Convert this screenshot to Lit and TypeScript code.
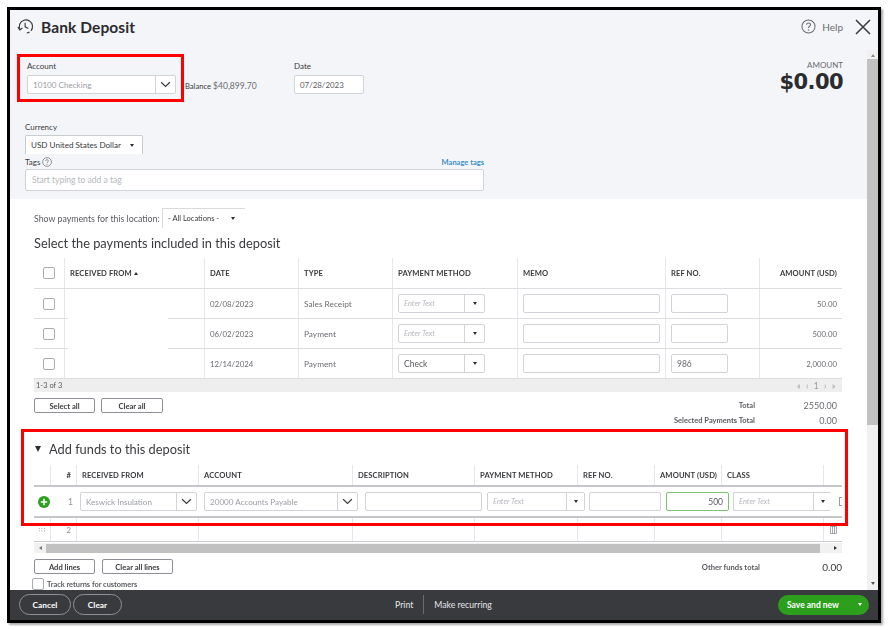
import { LitElement, html, css } from "lit";
import { customElement } from "lit/decorators.js";

const chevron = html`<svg class="chev" viewBox="0 0 12 8" width="11" height="7"><path d="M1 1.5 6 6.2 11 1.5" fill="none" stroke="#393a3d" stroke-width="1.4"/></svg>`;
const caret = html`<span class="caret"></span>`;
const qmark = (s: number) => html`<svg width=${s} height=${s} viewBox="0 0 16 16"><circle cx="8" cy="8" r="7" fill="none" stroke="#6b6c72" stroke-width="1.1"/><path d="M5.9 6.2C6 4.8 7 4.2 8 4.2c1.2 0 2.2.8 2.2 1.9 0 1.6-2.2 1.7-2.2 3.4" fill="none" stroke="#6b6c72" stroke-width="1.1"/><circle cx="8" cy="11.6" r=".8" fill="#6b6c72"/></svg>`;

const rows1 = [
  { date: "02/08/2023", type: "Sales Receipt", pm: "", ref: "", amt: "50.00" },
  { date: "06/02/2023", type: "Payment", pm: "", ref: "", amt: "500.00" },
  { date: "12/14/2024", type: "Payment", pm: "Check", ref: "986", amt: "2,000.00" },
];
const head1 = ["", "RECEIVED FROM", "DATE", "TYPE", "PAYMENT METHOD", "MEMO", "REF NO.", "AMOUNT (USD)"];
const head2 = ["", "#", "RECEIVED FROM", "ACCOUNT", "DESCRIPTION", "PAYMENT METHOD", "REF NO.", "AMOUNT (USD)", "CLASS", ""];

@customElement("app-root")
export class AppRoot extends LitElement {
  static styles = css`
    :host { display: block; width: 892px; height: 630px; background: #fff; font-family: Lato, "Open Sans", sans-serif; color: #393a3d; overflow: hidden; }
    * { box-sizing: border-box; }
    .page { padding: 7px 0 0 7px; }
    .window { position: relative; width: 874px; height: 616px; border: 3px solid #000; box-shadow: 2px 2px 2px #aaa; display: flex; flex-direction: column; background: #fff; filter: blur(0.3px); }
    .titlebar { height: 40px; flex: none; background: #f4f5f8; display: flex; align-items: center; padding: 0 7px 7px 7px; }
    .titlebar h1 { margin: 0 0 0 7px; font-size: 15.5px; font-weight: 700; color: #2b2c30; letter-spacing: .1px; }
    .spacer { flex: 1; }
    .help { font-size: 10px; color: #6b6c72; margin: 0 12px 0 6px; }
    .body { flex: 1; display: flex; min-height: 0; }
    .main { flex: 1; min-width: 0; overflow: hidden; }
    .vbar { width: 11px; flex: none; background: #f1f1f1; display: flex; flex-direction: column; align-items: center; }
    .vbar .thumb { width: 100%; height: 366px; background: #c1c1c1; margin-top: 2px; }
    .vbar .end { flex: 1; }
    .tri-up { width: 0; height: 0; border: 2px solid transparent; border-bottom: 3px solid #8a8a8a; margin-top: 2px; }
    .tri-down { width: 0; height: 0; border: 2px solid transparent; border-top: 3px solid #555; margin-bottom: 3px; }

    .panel { height: 149px; background: #f4f5f8; display: flex; flex-direction: column; }
    .acct-row { height: 69px; display: flex; padding: 11px 24px 0 17px; }
    .lbl { font-size: 8px; color: #393a3d; line-height: 11px; }
    .acct { width: 149px; margin-top: 3px; }
    .bal { font-size: 7.6px; margin: 20px 0 0 9px; width: 100px; white-space: nowrap; }
    .bal span { font-size: 8.6px; color: #6b6c72; }
    .date { margin-left: 9px; }
    .date .field { width: 70px; margin-top: 3px; height: 19px; font-size: 7.9px; color: #5a5b60; }
    .amount { margin-left: auto; text-align: right; line-height: 1; }
    .amount .small { font-size: 8px; color: #6b6c72; margin-top: 0; }
    .amount .big { font-size: 21px; font-weight: 700; color: #2b2c30; margin-top: 3px; font-family: "DejaVu Sans", sans-serif; letter-spacing: -.6px; }
    .cur { padding-left: 15px; margin-top: 3px; }
    .cur .select { width: 118px; height: 19px; margin-top: 2px; border: 1px solid #c9ccd1; border-bottom: none; border-radius: 2px 2px 0 0; background: #fff; display: flex; align-items: center; justify-content: space-between; padding: 0 8px 0 5px; font-size: 8.1px; white-space: nowrap; }
    .tags { padding: 0 0 0 15px; width: 474px; margin-top: 1px; }
    .tags-head { display: flex; align-items: center; justify-content: space-between; height: 14px; }
    .tags-left { display: flex; align-items: center; gap: 2px; }
    .manage { font-size: 7.5px; color: #3a8fc8; font-weight: 700; }
    .tags .field { height: 22px; width: 100%; font-size: 8.5px; color: #b5b8be; padding-left: 6px; }

    .field { display: flex; align-items: center; background: #fff; border: 1px solid #d0d3d8; border-radius: 2px; padding: 0 5px; font-size: 8.5px; white-space: nowrap; overflow: hidden; }
    .combo { display: flex; background: #fff; border: 1px solid #d0d3d8; border-radius: 2px; height: 19px; font-size: 8.1px; overflow: hidden; white-space: nowrap; }
    .combo .txt { flex: 1; min-width: 0; display: flex; align-items: center; padding-left: 5px; color: #9a9da3; }
    .combo .txt.val { color: #5a5b60; font-size: 8.5px; }
    .combo .txt.ph { font-style: italic; color: #b5b8be; font-size: 7.5px; }
    .combo .btn { flex: none; width: 20px; border-left: 1px solid #d0d3d8; display: flex; align-items: center; justify-content: center; }
    .caret { width: 0; height: 0; border-left: 2.5px solid transparent; border-right: 2.5px solid transparent; border-top: 3px solid #2b2c30; }
    .caret.up { transform: rotate(180deg); margin-left: 2px; }

    .sec { padding-left: 24px; width: 832px; }
    .loc { display: flex; height: 20px; margin-top: 9px; align-items: center; font-size: 8.8px; color: #5a5b60; }
    .loc .name { width: 128px; white-space: nowrap; }
    .loc .select { width: 83px; height: 20px; border: 1px solid #d8dade; border-width: 1px 0 0 1px; display: flex; align-items: center; justify-content: space-between; padding: 0 10px 0 5px; font-size: 7.5px; color: #393a3d; }
    h2 { margin: 0; font-weight: 400; font-size: 12.8px; color: #393a3d; }
    .h-sel { height: 30px; line-height: 30px; }

    .t1 .row { display: grid; grid-template-columns: 31px 140px 94px 94px 125px 148px 94px 82px; border-bottom: 1px solid #dcdee2; }
    .t1 .head { height: 31px; }
    .t1 .r { height: 30px; }
    .t1 .r:last-child { height: 29px; border-bottom: 2px solid #c4c6ca; }
    .t1body { position: relative; }
    .mask { position: absolute; left: 34px; width: 100px; top: 0; bottom: 2px; background: #fff; }
    .cell { border-right: 1px solid #e6e7ea; display: flex; align-items: center; padding: 0 5px; font-size: 8.3px; color: #6b6c72; min-width: 0; white-space: nowrap; overflow: hidden; }
    .cell:last-child { border-right: none; }
    .cell.num { font-size: 7.8px; }
    .hd { font-size: 7.6px; font-weight: 700; color: #393a3d; letter-spacing: .1px; }
    .cell.right { justify-content: flex-end; }
    .cell.center { justify-content: center; padding: 0; }
    .cell .combo { width: 87px; }
    .cell .field { height: 19px; }
    .memo { width: 138px; }
    .ref { width: 57px; color: #6b6c72; }
    .box { width: 12px; height: 12px; border: 1px solid #a8abb0; border-radius: 2px; background: #fff; flex: none; }
    .pager { height: 13px; background: #eeeeee; display: flex; align-items: center; justify-content: space-between; padding: 0 5px 0 2px; font-size: 7.5px; color: #5a5b60; }
    .pager .nav { color: #999ba0; letter-spacing: 1.6px; font-size: 8.5px; }
    .below { height: 37px; display: flex; justify-content: space-between; }
    .btns { display: flex; gap: 6px; padding-top: 6px; }
    .b { height: 15px; border: 1px solid #8d9096; border-radius: 2px; background: #fff; font-size: 7.6px; font-weight: 700; color: #393a3d; display: flex; align-items: center; justify-content: center; }
    .w61 { width: 61px; } .w62 { width: 62px; } .w71 { width: 71px; }
    .totals { display: grid; grid-template-columns: 150px 82px; width: 232px; align-items: center; grid-auto-rows: 15px; padding-top: 6px; margin-right: 5px; font-size: 7.5px; font-weight: 700; color: #5a5b60; text-align: right; }
    .totals .v { font-size: 9px; font-weight: 400; color: #6b6c72; }

    .h-add { height: 36px; display: flex; align-items: center; gap: 8px; padding-top: 4px; padding-left: 1px; }
    .tri { width: 0; height: 0; border-left: 3.5px solid transparent; border-right: 3.5px solid transparent; border-top: 6px solid #2b2c30; }
    .t2 .cols { display: grid; grid-template-columns: 17px 26px 122px 154px 122px 103px 77px 67px 102px 18px; }
    .t2 .head { height: 22px; border-bottom: 2px solid #c4c6ca; }
    .t2 .head .cell { padding-bottom: 1px; }
    .edit { height: 31px; display: flex; align-items: center; border-bottom: 2px solid #c4c6ca; overflow: hidden; }
    .edit > .plus { width: 17px; flex: none; display: flex; justify-content: center; padding-left: 3px; }
    .edit > .n { width: 22px; flex: none; text-align: right; font-size: 8.5px; color: #8d9096; }
    .edit .combo, .edit .field { flex: none; height: 19px; }
    .f-rf { width: 117px; margin-left: 7px; }
    .f-ac { width: 154px; margin-left: 7px; }
    .f-de { width: 117px; margin-left: 7px; }
    .f-pm { width: 98px; margin-left: 5px; }
    .f-pm .btn, .f-cl .btn { width: 18px; }
    .f-re { width: 72px; margin-left: 4px; }
    .f-am { width: 63px; margin-left: 5px; border-color: #7ac472 !important; justify-content: flex-end; color: #5a5b60; }
    .f-cl { width: 98px; margin-left: 4px; border-right: none !important; }
    .stub { flex: none; width: 4px; height: 9px; margin-left: 8px; border: 1px solid #9a9da3; border-right: none; }
    .r2 { height: 24px; border-bottom: 1px solid #c9ccd1; }
    .r2 .cell { color: #8d9096; }
    .grip { width: 8px; height: 6px; background-image: radial-gradient(#8f9196 0.7px, transparent 0.8px); background-size: 2.6px 2.6px; }
    .hbar { height: 10px; margin-top: 1px; background: #f1f1f1; display: flex; align-items: center; }
    .hbar .thumb { margin-left: 10px; width: 774px; height: 9px; background: #c1c1c1; }
    .tl { width: 0; height: 0; margin-left: 3px; margin-right: -6px; border: 2px solid transparent; border-right: 3px solid #777; }
    .tr { width: 0; height: 0; margin-left: 14px; border: 2px solid transparent; border-left: 3px solid #333; }
    .below2 { display: flex; justify-content: space-between; }
    .btns2 { display: flex; gap: 7px; padding-top: 6px; }
    .other { display: flex; align-items: center; padding-top: 6px; height: 21px; font-size: 7.6px; color: #5a5b60; font-weight: 700; }
    .other .v { width: 82px; text-align: right; font-size: 10px; font-weight: 400; color: #393a3d; }
    .track { display: flex; align-items: center; margin: 4px 0 0 -2px; font-size: 7.4px; font-weight: 700; color: #5a5b60; gap: 3px; }

    .footer { height: 30px; flex: none; background: #393a3d; display: flex; align-items: center; padding: 0 9px 1px; color: #e4e5e8; font-size: 8.7px; }
    .pill { height: 21px; border: 1px solid #8d9096; border-radius: 11px; display: flex; align-items: center; justify-content: center; font-weight: 700; color: #fff; font-size: 8.3px; }
    .cancel { width: 52px; } .clear { width: 49px; margin-left: 2px; }
    .mid { position: absolute; left: 385px; display: flex; align-items: center; }
    .mid .sep { width: 1px; height: 19px; background: #6b6c72; margin: 0 10px; }
    .save { margin-left: auto; width: 91px; height: 20px; border-radius: 10px; background: #2ca01c; color: #fff; font-weight: 700; font-size: 8.5px; display: flex; align-items: center; padding: 0 7px 0 9px; justify-content: space-between; }
    .caret.w { border-top-color: #fff; }

    .red { position: absolute; border: 3px solid #f00; pointer-events: none; }
    .red1 { left: 7px; top: 44px; width: 167px; height: 48px; }
    .red2 { left: 11px; top: 419px; width: 827px; height: 97px; }
  `;

  private combo(text: string, cls: string, kind: "" | "val" | "ph", arrow: unknown) {
    return html`<div class="combo ${cls}"><div class="txt ${kind}">${text}</div><div class="btn">${arrow}</div></div>`;
  }

  render() {
    return html`<div class="page"><div class="window">
      <div class="titlebar">
        <svg width="17" height="17" viewBox="0 0 18 18" fill="none" stroke="#393a3d" stroke-width="1.2">
          <path d="M3.2 12.2A7 7 0 1 1 9 16" stroke-dasharray="30 2 3 2"/>
          <path d="M1 9.6 3 12.6 5.8 10.6" />
          <path d="M8.6 5v4.4l3.4 1.6"/>
        </svg>
        <h1>Bank Deposit</h1>
        <div class="spacer"></div>
        ${qmark(15)}
        <span class="help">Help</span>
        <svg width="16" height="16" viewBox="0 0 16 16"><path d="M1 1 15 15M15 1 1 15" stroke="#393a3d" stroke-width="1.5"/></svg>
      </div>

      <div class="body">
        <div class="main">
          <div class="panel">
            <div class="acct-row">
              <div><div class="lbl">Account</div>${this.combo("10100 Checking", "acct", "", chevron)}</div>
              <div class="bal">Balance <span>$40,899.70</span></div>
              <div class="date"><div class="lbl">Date</div><div class="field">07/28/2023</div></div>
              <div class="amount"><div class="small">AMOUNT</div><div class="big">$0.00</div></div>
            </div>
            <div class="cur">
              <div class="lbl">Currency</div>
              <div class="select">USD United States Dollar ${caret}</div>
            </div>
            <div class="tags">
              <div class="tags-head">
                <div class="tags-left"><span class="lbl">Tags</span>${qmark(10)}</div>
                <span class="manage">Manage tags</span>
              </div>
              <div class="field">Start typing to add a tag</div>
            </div>
          </div>

          <div class="sec">
            <div class="loc"><span class="name">Show payments for this location:</span>
              <div class="select">- All Locations - ${caret}</div>
            </div>
            <h2 class="h-sel">Select the payments included in this deposit</h2>

            <div class="t1">
              <div class="row head">
                ${head1.map((h, i) => html`<div class="cell hd ${i === 7 ? "right" : ""} ${i === 0 ? "center" : ""}">${i === 0 ? html`<div class="box"></div>` : h}${i === 1 ? html`<span class="caret up"></span>` : ""}</div>`)}
              </div>
              <div class="t1body">
                ${rows1.map((r) => html`<div class="row r">
                  <div class="cell center"><div class="box"></div></div>
                  <div class="cell"></div>
                  <div class="cell num">${r.date}</div>
                  <div class="cell">${r.type}</div>
                  <div class="cell">${r.pm
                    ? this.combo(r.pm, "", "val", caret)
                    : this.combo("Enter Text", "", "ph", caret)}</div>
                  <div class="cell"><div class="field memo"></div></div>
                  <div class="cell"><div class="field ref">${r.ref}</div></div>
                  <div class="cell right num">${r.amt}</div>
                </div>`)}
                <div class="mask"></div>
              </div>
              <div class="pager"><span>1-3 of 3</span><span class="nav">« ‹ 1 › »</span></div>
            </div>

            <div class="below">
              <div class="btns"><div class="b w61">Select all</div><div class="b w62">Clear all</div></div>
              <div class="totals">
                <span>Total</span><span class="v">2550.00</span>
                <span>Selected Payments Total</span><span class="v">0.00</span>
              </div>
            </div>

            <h2 class="h-add"><span class="tri"></span>Add funds to this deposit</h2>

            <div class="t2">
              <div class="cols head">
                ${head2.map((h, i) => html`<div class="cell hd ${i === 1 ? "right" : ""}">${h}</div>`)}
              </div>
              <div class="edit">
                <div class="plus"><svg width="12" height="12" viewBox="0 0 12 12"><circle cx="6" cy="6" r="6" fill="#2ca01c"/><path d="M6 2.8v6.4M2.8 6h6.4" stroke="#fff" stroke-width="1.6"/></svg></div>
                <div class="n">1</div>
                ${this.combo("Keswick Insulation", "f-rf", "", chevron)}
                ${this.combo("20000 Accounts Payable", "f-ac", "", chevron)}
                <div class="field f-de"></div>
                ${this.combo("Enter Text", "f-pm", "ph", caret)}
                <div class="field f-re"></div>
                <div class="field f-am">500</div>
                ${this.combo("Enter Text", "f-cl", "ph", caret)}
                <div class="stub"></div>
              </div>
              <div class="cols r2">
                <div class="cell center"><div class="grip"></div></div>
                <div class="cell right">2</div>
                <div class="cell"></div><div class="cell"></div><div class="cell"></div><div class="cell"></div><div class="cell"></div><div class="cell"></div><div class="cell"></div>
                <div class="cell center">
                  <svg width="7" height="8" viewBox="0 0 7 8" fill="none" stroke="#8d9096" stroke-width=".8"><path d="M.5.5h6v7h-6zM2.5.5v7M4.5.5v7"/></svg>
                </div>
              </div>
              <div class="hbar"><span class="tl"></span><div class="thumb"></div><span class="tr"></span></div>
            </div>

            <div class="below2">
              <div>
                <div class="btns2"><div class="b w61">Add lines</div><div class="b w71">Clear all lines</div></div>
                <div class="track"><div class="box"></div>Track returns for customers</div>
              </div>
              <div class="other">Other funds total<span class="v">0.00</span></div>
            </div>
          </div>
        </div>
        <div class="vbar"><span class="tri-up"></span><div class="thumb"></div><div class="end"></div><span class="tri-down"></span></div>
      </div>

      <div class="footer">
        <div class="pill cancel">Cancel</div>
        <div class="pill clear">Clear</div>
        <div class="mid"><span>Print</span><span class="sep"></span><span>Make recurring</span></div>
        <div class="save"><span>Save and new</span><span class="caret w"></span></div>
      </div>

      <div class="red red1"></div>
      <div class="red red2"></div>
    </div></div>`;
  }
}
